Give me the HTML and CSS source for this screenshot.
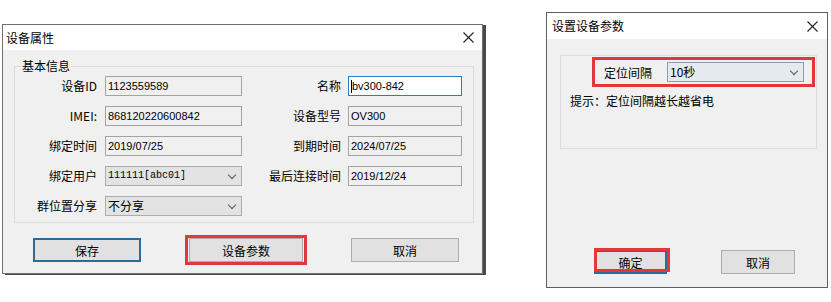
FILE: index.html
```html
<!DOCTYPE html>
<html>
  <head>
    <meta charset="utf-8">
    <title>设备属性</title>
    <link rel="stylesheet" href="styles.css">
  </head>
  <body>
    <div class="screen">

      <!-- 设备属性 -->
      <div class="dlg dlg-props">
        <div class="dlg-title">
          <span>设备属性</span>
          <svg class="close" width="11" height="11" viewBox="0 0 11 11"><path d="M0.5 0.5L10.5 10.5M10.5 0.5L0.5 10.5" stroke="#222" stroke-width="1.1" fill="none"/></svg>
        </div>
        <div class="dlg-body">
          <fieldset class="group">
            <legend>基本信息</legend>
            <div class="form-grid">
              <label class="lbl">设备ID</label>
              <div class="field">1123559589</div>
              <label class="lbl lbl2">名称</label>
              <div class="field active"><span class="caret"></span>bv300-842</div>

              <label class="lbl">IMEI:</label>
              <div class="field">868120220600842</div>
              <label class="lbl lbl2">设备型号</label>
              <div class="field">OV300</div>

              <label class="lbl">绑定时间</label>
              <div class="field">2019/07/25</div>
              <label class="lbl lbl2">到期时间</label>
              <div class="field">2024/07/25</div>

              <label class="lbl">绑定用户</label>
              <div class="combo mono">111111[abc01]<i class="chev"></i></div>
              <label class="lbl lbl2">最后连接时间</label>
              <div class="field">2019/12/24</div>

              <label class="lbl">群位置分享</label>
              <div class="combo cjk">不分享<i class="chev"></i></div>
            </div>
          </fieldset>

          <div class="btn-row props-btns">
            <button class="btn btn-default">保存</button>
            <div class="mark"><button class="btn btn-param">设备参数</button></div>
            <button class="btn btn-cancel">取消</button>
          </div>
        </div>
      </div>

      <!-- 设置设备参数 -->
      <div class="dlg dlg-param">
        <div class="dlg-title">
          <span>设置设备参数</span>
          <svg class="close" width="11" height="11" viewBox="0 0 11 11"><path d="M0.5 0.5L10.5 10.5M10.5 0.5L0.5 10.5" stroke="#222" stroke-width="1.1" fill="none"/></svg>
        </div>
        <div class="dlg-body">
          <div class="group group-plain">
            <div class="mark interval">
              <label class="lbl-interval">定位间隔</label>
              <div class="combo cjk combo-interval">10秒<i class="chev"></i></div>
            </div>
            <p class="hint">提示：定位间隔越长越省电</p>
          </div>

          <div class="btn-row param-btns">
            <div class="ok-wrap">
              <button class="btn btn-default btn-ok">确定</button>
              <span class="mark-over"></span>
            </div>
            <button class="btn btn-small">取消</button>
          </div>
        </div>
      </div>

    </div>
  </body>
</html>
```

FILE: styles.css
```css
*{
  box-sizing: border-box;
}
body{
  margin: 0;
  background: #fff;
  color: #000;
  font-family: "Noto Sans CJK SC", "Liberation Sans", sans-serif;
  font-size: 12px;
}
.screen{
  display: flex;
  align-items: flex-start;
  padding-left: 2px;
  gap: 63px;
}

/**** 对话框 ****/
.dlg{
  border: 1px solid #6f6f6f;
  background: #f0f0f0;
}
.dlg-title{
  display: flex;
  align-items: center;
  justify-content: space-between;
  background: #fff;
  line-height: 16px;
}
.close{
  display: block;
}
.dlg-body{
  display: flex;
  flex-direction: column;
}

/** 设备属性 **/
.dlg-props{
  width: 481px;
  margin-top: 24px;
  box-shadow: 3px 1px 0 #4a4a4a;
}
.dlg-props .dlg-title{
  height: 25px;
  padding: 0 8px 0 3px;
}
.dlg-props .dlg-body{
  padding: 8px 8px 8px 11px;
}
.group{
  margin: 0;
  padding: 0 0 6px 0;
  border: 1px solid #dcdcdc;
  min-width: 0;
}
.group legend{
  margin-left: 6px;
  padding: 0 1px;
  line-height: 16px;
}
.form-grid{
  display: grid;
  grid-template-columns: 90px 137px 106px 114px;
  grid-auto-rows: 20px;
  row-gap: 10px;
  margin-top: 2px;
}
.lbl{
  padding-right: 8px;
  text-align: right;
  line-height: 20px;
  white-space: nowrap;
}
.lbl2{
  padding-right: 7px;
}
.field{
  position: relative;
  border: 1px solid #a3a3a3;
  background: #f0f0f0;
  padding-left: 2px;
  font-family: "Liberation Sans", sans-serif;
  font-size: 11px;
  line-height: 18px;
  white-space: nowrap;
}
.field.active{
  background: #fff;
  border-color: #2f7bbd;
}
.caret{
  display: inline-block;
  width: 1px;
  height: 13px;
  vertical-align: -3px;
  background: #000;
}
.combo{
  position: relative;
  border: 1px solid #adadad;
  background: #e3e3e3;
  padding-left: 2px;
  line-height: 18px;
  white-space: nowrap;
}
.combo.mono{
  font-family: "Liberation Mono", monospace;
  font-size: 10px;
}
.chev{
  position: absolute;
  right: 6px;
  top: 5px;
  width: 6px;
  height: 6px;
  border-right: 1px solid #555;
  border-bottom: 1px solid #555;
  transform: rotate(45deg);
}

/** 按钮 **/
.btn{
  display: block;
  height: 24px;
  padding: 0;
  border: 1px solid #adadad;
  background: #e1e1e1;
  color: #000;
  font-family: "Noto Sans CJK SC", sans-serif;
  font-size: 12px;
}
.btn-default{
  border: 2px solid #2a6b9c;
}
.btn-row{
  display: flex;
  align-items: center;
}
.props-btns{
  margin-top: 12px;
  padding-left: 19px;
  gap: 44px;
}
.props-btns .btn-default{
  width: 108px;
}
.mark{
  border: 3px solid #e0383b;
}
.props-btns .mark{
  padding: 0 1px;
}
.btn-param{
  width: 114px;
}
.btn-cancel{
  width: 108px;
}

/** 设置设备参数 **/
.dlg-param{
  width: 282px;
  margin-top: 12px;
  border-color: #5f5f5f;
}
.dlg-param .dlg-title{
  height: 26px;
  padding: 0 9px 0 5px;
}
.dlg-param .dlg-body{
  padding: 16px 10px 13px 13px;
}
.group-plain{
  padding: 0 0 38px 0;
  height: 94px;
}
.interval{
  display: flex;
  align-items: center;
  margin: 1px 1px 0 31px;
  height: 30px;
  padding-left: 9px;
}
.lbl-interval{
  width: 63px;
}
.combo-interval{
  width: 137px;
  height: 20px;
  background: #e5eaef;
  border-color: #8a9cae;
}
.hint{
  margin: 6px 0 0 9px;
  line-height: 16px;
}
.param-btns{
  margin-top: 101px;
  padding-left: 34px;
  gap: 54px;
}
.ok-wrap{
  position: relative;
}
.btn-ok{
  width: 73px;
}
.mark-over{
  position: absolute;
  left: 0;
  top: -2px;
  right: -3px;
  bottom: 2px;
  border: 3px solid #e0383b;
}
.btn-small{
  width: 74px;
}
```
